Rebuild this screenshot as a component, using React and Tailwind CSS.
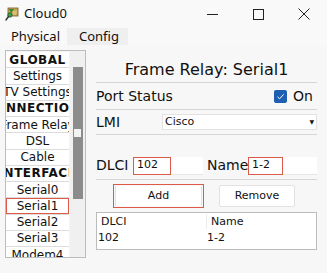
import React from "react";

const items = [
  { label: "GLOBAL", bold: true },
  { label: "Settings" },
  { label: "TV Settings" },
  { label: "CONNECTIONS", bold: true },
  { label: "Frame Relay" },
  { label: "DSL" },
  { label: "Cable" },
  { label: "INTERFACE", bold: true },
  { label: "Serial0" },
  { label: "Serial1", active: true },
  { label: "Serial2" },
  { label: "Serial3" },
  { label: "Modem4" },
];

function CloudIcon() {
  return (
    <svg width="14" height="15" viewBox="0 0 14 15">
      <rect x="3" y="1" width="10" height="8" fill="#c9a65a" stroke="#7a5a20" strokeWidth="0.8" />
      <path d="M4 2 L9 2 L6 6 Z" fill="#2e8b2e" />
      <path d="M8 4 L12 4 L11 8 L7 8 Z" fill="#d8c070" />
      <circle cx="5" cy="8" r="2.2" fill="#3aa04a" stroke="#1d5a26" strokeWidth="0.8" />
      <path d="M3.5 9.5 L1 13" stroke="#333" strokeWidth="1.4" strokeLinecap="round" />
    </svg>
  );
}

export default function App() {
  return (
    <div className="w-[327px] h-[273px] overflow-hidden bg-[#f7f7f7] text-[#111] font-['DejaVu_Sans',sans-serif]">
      {/* title bar */}
      <div className="h-[28px] flex items-center bg-[#f9f9f9] font-['Noto_Sans',sans-serif]">
        <div className="ml-[5px] mr-[5px] mt-[1px]">
          <CloudIcon />
        </div>
        <span className="text-[13px] text-[#111]">Cloud0</span>
        <div className="ml-auto flex items-center h-full">
          <div className="w-[46px] flex justify-center">
            <div className="w-[11px] h-[1px] bg-[#222]" />
          </div>
          <div className="w-[46px] flex justify-center">
            <div className="w-[11px] h-[11px] border border-[#222]" />
          </div>
          <div className="w-[46px] flex justify-center">
            <svg width="12" height="12" viewBox="0 0 12 12">
              <path d="M0.5 0.5 L11.5 11.5 M11.5 0.5 L0.5 11.5" stroke="#222" strokeWidth="1" />
            </svg>
          </div>
        </div>
      </div>

      {/* tabs */}
      <div className="h-[17px] flex items-end font-['Noto_Sans',sans-serif] text-[13px] leading-[17px] bg-[#f9f9f9]">
        <div className="w-[67px] pl-[11px]">Physical</div>
        <div className="w-[61px] pl-[12px] bg-[#efefef]">Config</div>
      </div>

      <div className="flex pt-[5px]">
        {/* left list */}
        <div className="ml-[5px] w-[81px] h-[208px] border border-[#bdbdbd] bg-[#f4f4f4] flex overflow-hidden">
          <div className="w-[63px] pt-[1px] flex flex-col">
            {items.map((it) => (
              <div
                key={it.label}
                className={
                  "relative h-[16.25px] shrink-0 flex justify-center items-center bg-white border-b border-[#dcdcdc] text-[12px] leading-none whitespace-nowrap overflow-hidden " +
                  (it.bold ? "font-bold tracking-[0.5px]" : "")
                }
              >
                <span className="block shrink-0">{it.label}</span>
                {it.active && (
                  <div className="absolute inset-0 border-[1.5px] border-[#dd5a48]" />
                )}
              </div>
            ))}
          </div>
          <div className="w-[16px] ml-[1px] bg-[#f0f0f0] flex justify-center pt-[16px]">
            <div className="w-[10px] h-[132px] bg-[#8c8c8c] flex justify-center pt-[62px]">
              <div className="w-[7px] h-[8px] bg-[#f2f2f2]" />
            </div>
          </div>
        </div>

        {/* right panel */}
        <div className="ml-[10px] w-[221px] flex flex-col">
          <div className="h-[32px] flex items-end justify-center text-[16px] leading-[20px] pb-[2px]">
            Frame Relay: Serial1
          </div>
          <div className="h-px bg-[#d6d6d6]" />
          <div className="h-[26px] flex items-center text-[14px]">
            <span>Port Status</span>
            <div className="ml-auto flex items-center">
              <div className="w-[13px] h-[13px] rounded-[2px] bg-[#1d5fb0] flex items-center justify-center">
                <svg width="9" height="9" viewBox="0 0 9 9">
                  <path d="M1.5 4.8 L3.6 6.8 L7.6 2.4" fill="none" stroke="white" strokeWidth="1" />
                </svg>
              </div>
              <span className="ml-[6px] mr-[4px]">On</span>
            </div>
          </div>
          <div className="h-px bg-[#d6d6d6]" />
          <div className="h-[24px] flex items-center text-[14px]">
            <span className="w-[66px]">LMI</span>
            <div className="flex-1 h-[16px] bg-white border border-[#e2e2e2] flex items-center text-[11px] pl-[2px] pr-[2px]">
              <span>Cisco</span>
              <span className="ml-auto text-[6px] leading-none">▼</span>
            </div>
          </div>
          <div className="h-px bg-[#d6d6d6]" />

          {/* DLCI / Name */}
          <div className="mt-[21px] h-[19px] flex items-center text-[14px]">
            <span className="w-[37px]">DLCI</span>
            <div className="relative w-[70px] h-[18px] bg-white border-b border-[#e6e6e6] text-[11px] flex items-center pl-[4px]">
              102
              <div className="absolute left-0 top-0 w-[38px] h-[18px] border-[1.5px] border-[#dd5a48]" />
            </div>
            <span className="ml-[4px] w-[41px]">Name</span>
            <div className="relative flex-1 h-[18px] bg-white border-b border-[#e6e6e6] text-[11px] flex items-center pl-[4px]">
              1-2
              <div className="absolute left-0 top-0 w-[35px] h-[18px] border-[1.5px] border-[#dd5a48]" />
            </div>
          </div>
          <div className="mt-[4px] h-px bg-[#d6d6d6]" />

          {/* buttons */}
          <div className="mt-[4px] h-[24px] flex items-center text-[11px]">
            <div className="ml-[17px] w-[91px] h-[24px] border-[1.5px] border-[#dd5a48] p-[1px]">
              <div className="h-full bg-white border-x border-[#e4e4e4] flex items-center justify-center">
                Add
              </div>
            </div>
            <div className="ml-[15px] w-[76px] h-[22px] bg-white border border-[#e2e2e2] rounded-[2px] flex items-center justify-center">
              Remove
            </div>
          </div>

          {/* table */}
          <div className="mt-[4px] h-[38px] bg-white border border-[#bcbcbc] text-[11px] leading-[15px]">
            <div className="flex pt-[1px]">
              <span className="w-[109px] pl-[4px]">DLCI</span>
              <span className="border-l border-[#ececec] pl-[4px]">Name</span>
            </div>
            <div className="flex pt-[1px]">
              <span className="w-[109px] pl-[1px]">102</span>
              <span className="pl-[1px]">1-2</span>
            </div>
          </div>
        </div>
      </div>
    </div>
  );
}
